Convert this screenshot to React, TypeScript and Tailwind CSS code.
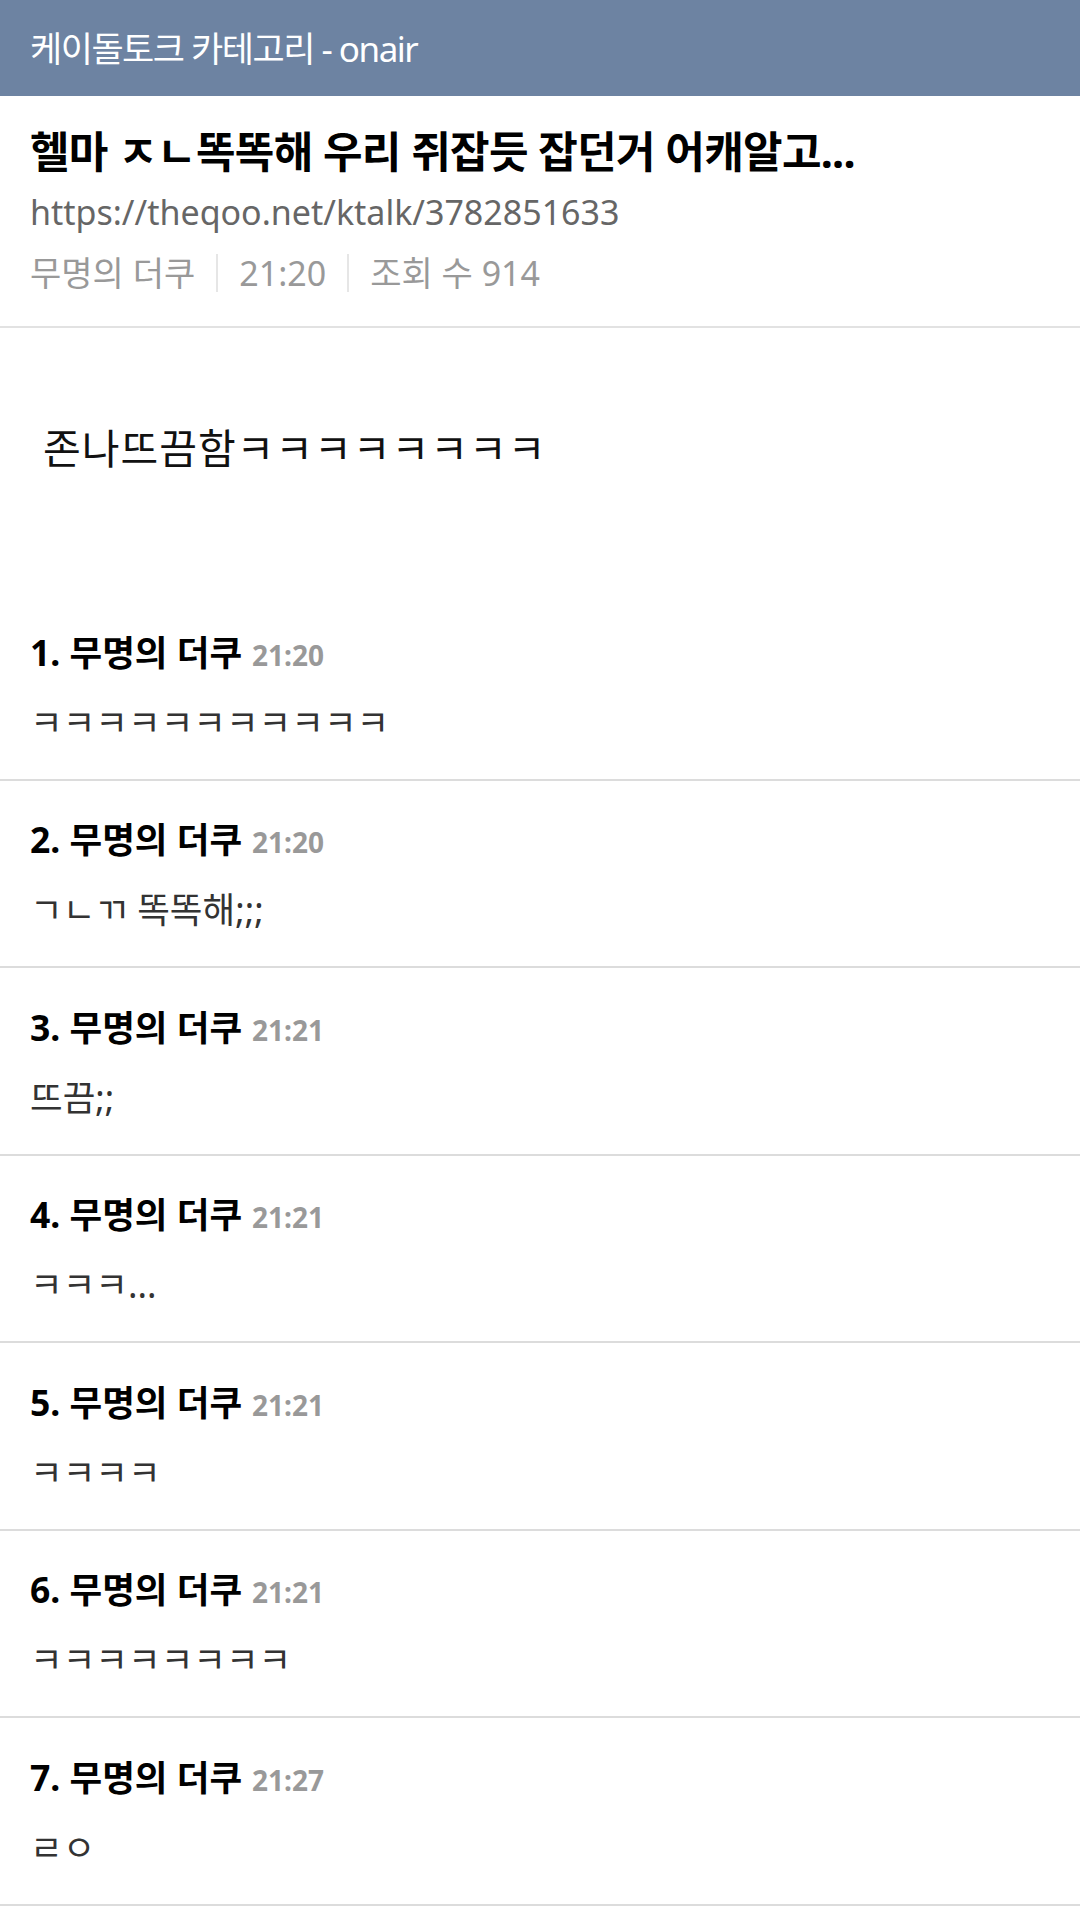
const comments = [
  { no: 1, time: "21:20", body: "ㅋㅋㅋㅋㅋㅋㅋㅋㅋㅋㅋ" },
  { no: 2, time: "21:20", body: "ㄱㄴㄲ 똑똑해;;;" },
  { no: 3, time: "21:21", body: "뜨끔;;" },
  { no: 4, time: "21:21", body: "ㅋㅋㅋ..." },
  { no: 5, time: "21:21", body: "ㅋㅋㅋㅋ" },
  { no: 6, time: "21:21", body: "ㅋㅋㅋㅋㅋㅋㅋㅋ" },
  { no: 7, time: "21:27", body: "ㄹㅇ" },
];

const font = "font-['Noto_Sans','Noto_Sans_CJK_KR',sans-serif]";

export default function App() {
  return (
    <div className={`min-h-[1912px] w-[1080px] bg-white ${font}`}>
      {/* Category bar */}
      <div className="flex h-[96px] items-center bg-[#6d83a2] px-[30px]">
        <span className="text-[35px] leading-none font-normal tracking-[-1.5px] text-white">
          케이돌토크 카테고리 - onair
        </span>
      </div>

      {/* Post head */}
      <div className="border-b-2 border-[#e2e2e2] px-[30px] pt-[30px] pb-[33px]">
        <h1 className="text-[43px] leading-[52px] font-bold tracking-[-0.7px] text-black">
          헬마 ㅈㄴ똑똑해 우리 쥐잡듯 잡던거 어캐알고...
        </h1>
        <div className="mt-[12px] text-[34px] leading-[44px] text-[#666]">
          https://theqoo.net/ktalk/3782851633
        </div>
        <div className="mt-[19px] flex h-[40px] items-center text-[34px] leading-[40px] text-[#999]">
          <span>무명의 더쿠</span>
          <span className="mx-[21px] h-[38px] w-[2px] bg-[#e6e6e6]" />
          <span>21:20</span>
          <span className="mx-[21px] h-[38px] w-[2px] bg-[#e6e6e6]" />
          <span>조회 수 914</span>
        </div>
      </div>

      {/* Post body */}
      <div className="h-[265px] px-[30px] pt-[96px]">
        <p className="pl-[13px] text-[41px] leading-[48px] tracking-[1px] text-[#111]">
          존나뜨끔함ㅋㅋㅋㅋㅋㅋㅋㅋ
        </p>
      </div>

      {/* Comments */}
      <ul>
        {comments.map((c) => (
          <li
            key={c.no}
            className="border-b-2 border-[#dcdcdc] px-[30px] pt-[36.5px] pb-[35px]"
          >
            <div className="flex h-[44px] items-baseline gap-[10px] leading-[44px]">
              <span className="text-[35.5px] font-bold text-black">
                {c.no}. 무명의 더쿠
              </span>
              <span className="text-[28px] font-bold text-[#999]">{c.time}</span>
            </div>
            <p className="mt-[26px] h-[44px] text-[35.5px] leading-[44px] text-[#333]">
              {c.body}
            </p>
          </li>
        ))}
      </ul>
    </div>
  );
}
